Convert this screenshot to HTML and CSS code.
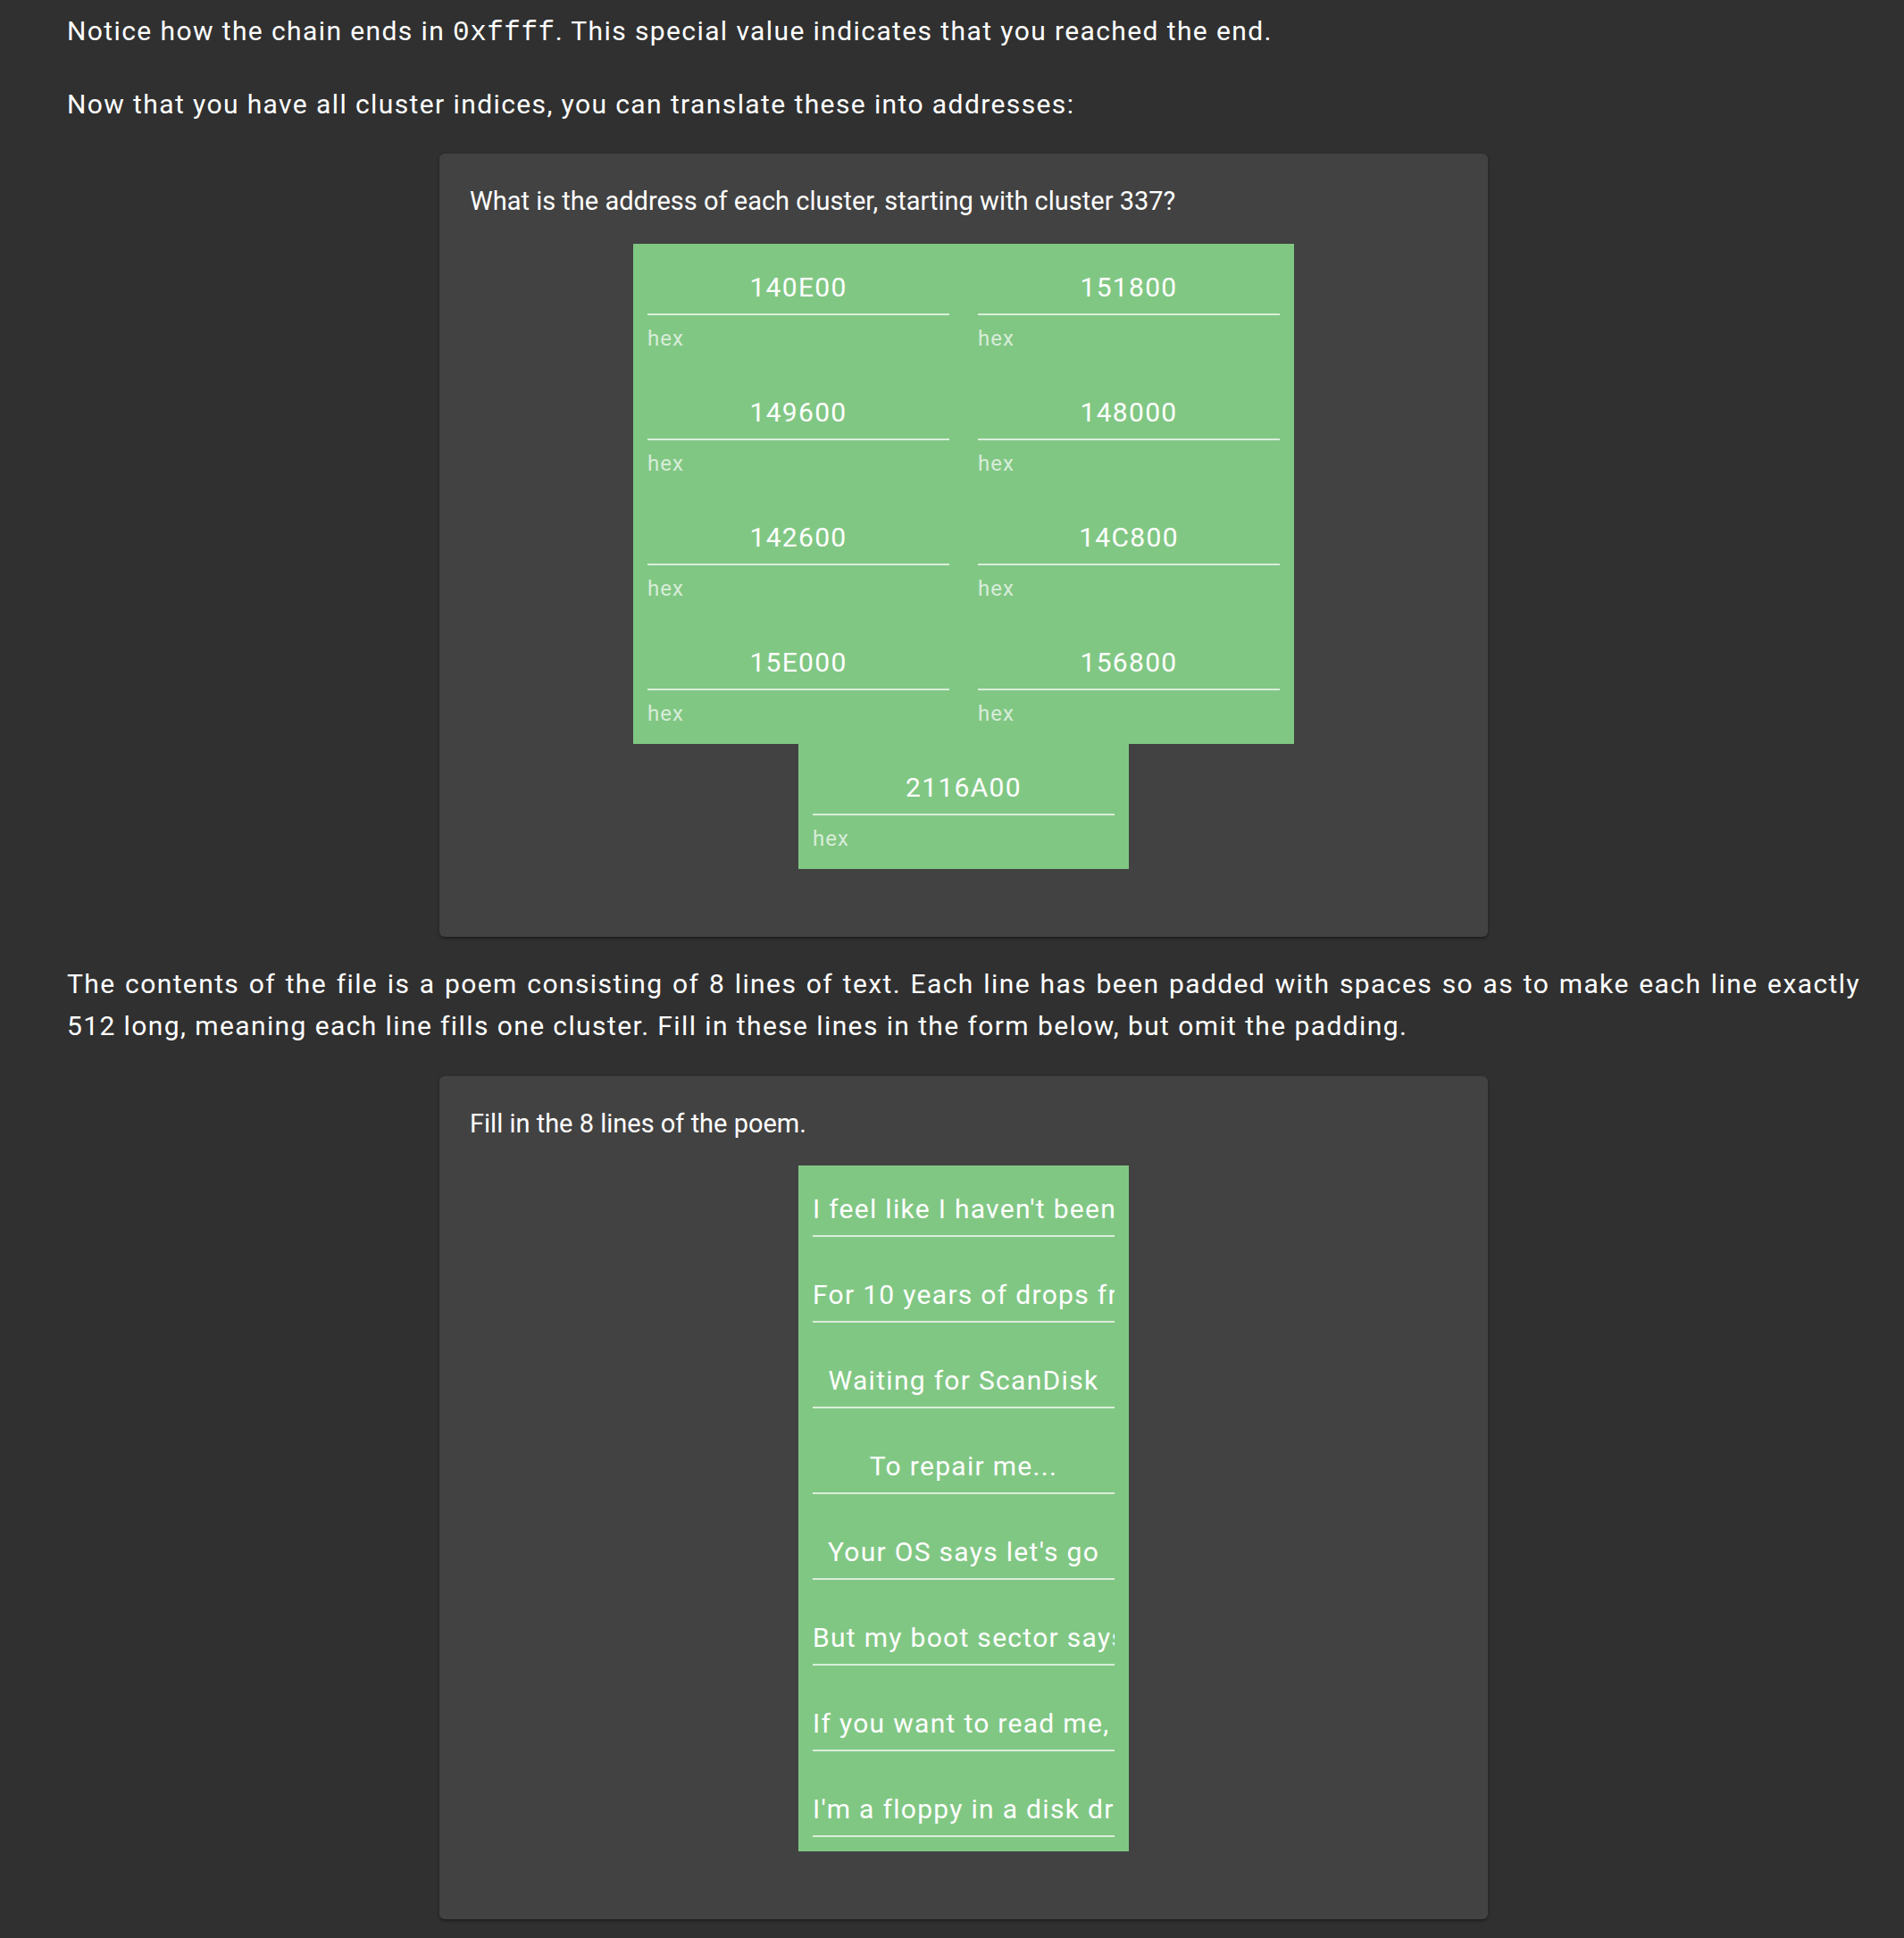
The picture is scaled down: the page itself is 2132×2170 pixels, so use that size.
FILE: index.html
```html
<!DOCTYPE html>
<html lang="en">
<head>
<meta charset="utf-8">
<title>FAT chain</title>
<link rel="stylesheet" href="styles.css">
</head>
<body>
<main class="content">
  <p class="para first">Notice how the chain ends in <code>0xffff</code>. This special value indicates that you reached the end.</p>
  <p class="para">Now that you have all cluster indices, you can translate these into addresses:</p>

  <section class="card">
    <p class="question">What is the address of each cluster, starting with cluster 337?</p>
    <div class="fields fields-wide">
      <div class="field"><div class="infix"><input class="inp" value="140E00"></div><div class="hint">hex</div></div>
      <div class="field"><div class="infix"><input class="inp" value="151800"></div><div class="hint">hex</div></div>
      <div class="field"><div class="infix"><input class="inp" value="149600"></div><div class="hint">hex</div></div>
      <div class="field"><div class="infix"><input class="inp" value="148000"></div><div class="hint">hex</div></div>
      <div class="field"><div class="infix"><input class="inp" value="142600"></div><div class="hint">hex</div></div>
      <div class="field"><div class="infix"><input class="inp" value="14C800"></div><div class="hint">hex</div></div>
      <div class="field"><div class="infix"><input class="inp" value="15E000"></div><div class="hint">hex</div></div>
      <div class="field"><div class="infix"><input class="inp" value="156800"></div><div class="hint">hex</div></div>
      <div class="field"><div class="infix"><input class="inp" value="2116A00"></div><div class="hint">hex</div></div>
    </div>
  </section>

  <p class="para justify">The contents of the file is a poem consisting of 8 lines of text. Each line has been padded with spaces so as to make each line exactly 512 long, meaning each line fills one cluster. Fill in these lines in the form below, but omit the padding.</p>

  <section class="card">
    <p class="question">Fill in the 8 lines of the poem.</p>
    <div class="fields fields-narrow">
      <div class="field plain"><div class="infix"><input class="inp" value="I feel like I haven't been defragged"></div></div>
      <div class="field plain"><div class="infix"><input class="inp" value="For 10 years of drops from the USB"></div></div>
      <div class="field plain"><div class="infix"><input class="inp" value="Waiting for ScanDisk"></div></div>
      <div class="field plain"><div class="infix"><input class="inp" value="To repair me..."></div></div>
      <div class="field plain"><div class="infix"><input class="inp" value="Your OS says let's go"></div></div>
      <div class="field plain"><div class="infix"><input class="inp" value="But my boot sector says no"></div></div>
      <div class="field plain"><div class="infix"><input class="inp" value="If you want to read me, please reboot"></div></div>
      <div class="field plain"><div class="infix"><input class="inp" value="I'm a floppy in a disk drive"></div></div>
    </div>
  </section>
</main>
</body>
</html>
```

FILE: styles.css
```css
html, body {
  margin: 0;
  padding: 0;
}

body {
  background: #303030;
  color: #ffffff;
  font-family: Roboto, "Noto Sans", sans-serif;
  font-size: 30px;
  line-height: 47.5px;
  letter-spacing: 1.4px;
  min-height: 2170px;
}

.content {
  margin-left: 75px;
  width: 2008px;
  padding-top: 11px;
  padding-bottom: 20px;
}

.para {
  margin: 0 0 32px 0;
}

.justify {
  text-align: justify;
}

code {
  font-family: "Liberation Mono", monospace;
  font-size: 31px;
  letter-spacing: 0.5px;
}

.card {
  width: 1174px;
  box-sizing: border-box;
  margin: 0 auto 29px auto;
  background: #424242;
  border-radius: 6px;
  padding: 30px 34px 76px 34px;
  box-shadow: 0 3px 2px -2px rgba(0, 0, 0, 0.25), 0 2px 3px 0 rgba(0, 0, 0, 0.18), 0 1px 5px 0 rgba(0, 0, 0, 0.12);
}

.question {
  margin: 0 0 23px 0;
  font-size: 29px;
  letter-spacing: 0;
}

.fields {
  display: flex;
  flex-wrap: wrap;
  justify-content: center;
  margin: 0 auto;
}

.fields-wide {
  width: 740px;
}

.fields-narrow {
  width: 370px;
}

.field {
  width: 370px;
  height: 140px;
  box-sizing: border-box;
  padding: 0 16px;
  background: #81c784;
}

.field.plain {
  height: 96px;
}

.infix {
  padding: 32px 0 12px 0;
  border-bottom: 2px solid rgba(255, 255, 255, 0.7);
}

.inp {
  display: block;
  width: 100%;
  height: 34px;
  margin: 0;
  padding: 0;
  border: none;
  outline: none;
  background: transparent;
  color: #ffffff;
  font-family: Roboto, "Noto Sans", sans-serif;
  font-size: 30px;
  line-height: 34px;
  letter-spacing: 1.3px;
  text-align: center;
}

.hint {
  margin-top: 14px;
  font-size: 24px;
  line-height: 24px;
  letter-spacing: 1px;
  color: rgba(255, 255, 255, 0.7);
}
```
